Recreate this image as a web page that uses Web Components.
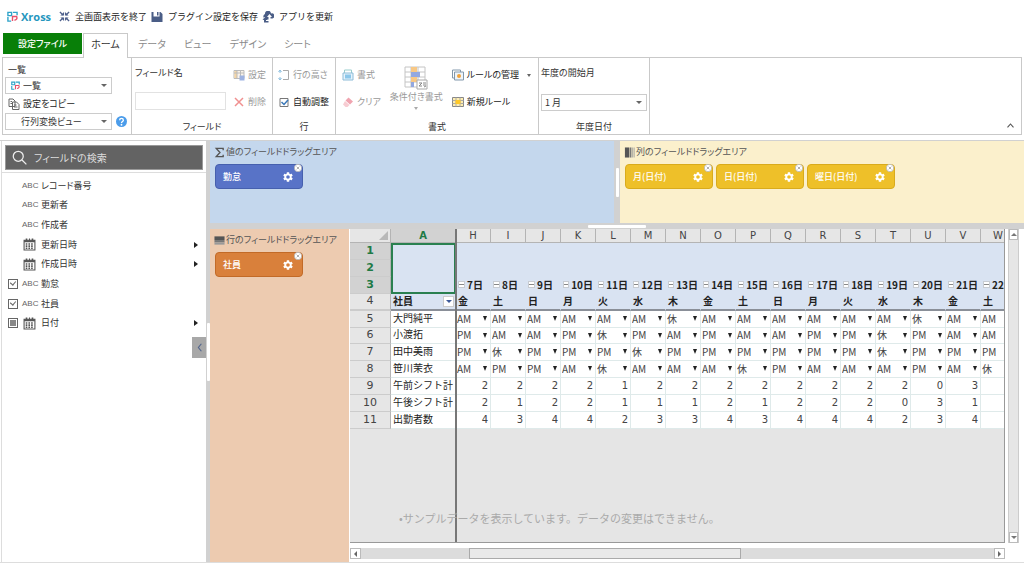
<!DOCTYPE html>
<html lang="ja">
<head>
<meta charset="utf-8">
<meta name="viewport" content="width=device-width, initial-scale=1">
<title>Xross</title>
<style>
:root {
  --ui-font: "Noto Sans CJK JP", sans-serif;
  --sheet-font: "DejaVu Sans", "Noto Sans CJK JP", sans-serif;
  --line: #c9c9c9;
  --gap: #d1d1d1;
  --text: #333;
  --muted: #999;
}

* {
  box-sizing: border-box;
}

body {
  margin: 0;
  height: 100vh;
  overflow: hidden;
  display: flex;
  flex-direction: column;
  background: #fff;
  color: var(--text);
  font: 9px/14px var(--ui-font);
  font-feature-settings: "palt";
}

.ribbon {
  display: flex;
  flex: none;
  height: 78px;
  margin: 0 2px;
  border: 1px solid var(--line);
}

.ribbon-end {
  flex: 1;
  display: flex;
  justify-content: flex-end;
  align-items: flex-end;
}

.ribbon-end button {
  border: 0;
  background: none;
  padding: 4px 6px;
  height: 18px;
  line-height: 0;
}

.stack {
  display: flex;
  flex-direction: column;
  align-items: flex-start;
}

.pair {
  display: grid;
  grid-template-rows: 16px 18px;
  row-gap: 10px;
  align-items: center;
  justify-items: start;
  align-content: start;
  padding-top: 9px;
}

.help {
  display: flex;
  gap: 4px;
  align-items: center;
}

.help button {
  border: 0;
  background: none;
  padding: 0;
  line-height: 0;
}

.workspace {
  flex: 1;
  min-height: 0;
  display: flex;
  margin: 5px 0 13px;
  border-top: 1px solid var(--gap);
  border-bottom: 1px solid #ddd;
}

.fields {
  flex: none;
  width: 205px;
  margin-left: 1px;
  border-left: 1px solid #ddd;
  display: flex;
  flex-direction: column;
  position: relative;
}

.list {
  display: grid;
  grid-template-rows: repeat(8, 1fr);
  height: 157px;
  margin-top: 3px;
}

.collapse {
  position: absolute;
  right: 0;
  top: 196px;
  width: 14px;
  height: 21px;
  padding: 0;
  border: 0;
  background: #a8a8a8;
  display: grid;
  place-items: center;
}

.main {
  flex: 1;
  min-width: 0;
  display: flex;
  flex-direction: column;
}

.top-areas {
  flex: none;
  height: 82px;
  display: flex;
}

.top-areas drop-area {
  flex: 1;
}

.bottom {
  flex: 1;
  min-height: 0;
  display: flex;
}

.bottom drop-area {
  flex: none;
  width: 139px;
}
</style>
</head>
<body>
<top-bar></top-bar>
<tab-bar></tab-bar>

<section class="ribbon">
  <ribbon-group style="--w: 129px">
    <div class="stack" style="padding: 5px 1px 0">
      <drop-down label="一覧" value="一覧" icon="logo" style="--field: 107px"></drop-down>
      <tool-button icon="copy" style="--row: 19px">設定をコピー</tool-button>
      <div class="help">
        <drop-down name="ビュー" value="行列変換ビュー" indent style="--field: 107px"></drop-down>
        <button aria-label="ヘルプ"><ui-icon name="help" size="11"></ui-icon></button>
      </div>
    </div>
  </ribbon-group>
  <ribbon-group caption="フィールド" style="--w: 141px">
    <text-field label="フィールド名"></text-field>
    <div class="pair" style="padding-left: 2px">
      <tool-button icon="config" off>設定</tool-button>
      <tool-button icon="cross" off>削除</tool-button>
    </div>
  </ribbon-group>
  <ribbon-group caption="行" style="--w: 63px">
    <div class="pair" style="padding-left: 1px">
      <tool-button icon="rowheight" off>行の高さ</tool-button>
      <tool-button icon="tick">自動調整</tool-button>
    </div>
  </ribbon-group>
  <ribbon-group caption="書式" style="--w: 203px">
    <div class="pair" style="padding-left: 2px">
      <tool-button icon="format" off>書式</tool-button>
      <tool-button icon="eraser" off>クリア</tool-button>
    </div>
    <big-button icon="condition">条件付き書式</big-button>
    <div class="pair">
      <tool-button icon="rules" menu>ルールの管理</tool-button>
      <tool-button icon="newrule">新規ルール</tool-button>
    </div>
  </ribbon-group>
  <ribbon-group caption="年度日付" style="--w: 111px">
    <div class="stack" style="padding: 8px 1px 0">
      <drop-down label="年度の開始月" value="1 月" style="--field: 106px; --label-gap: 14px"></drop-down>
    </div>
  </ribbon-group>
  <div class="ribbon-end">
    <button aria-label="リボンを閉じる"><ui-icon name="up" size="9"></ui-icon></button>
  </div>
</section>

<div class="workspace">
  <section class="fields">
    <search-box></search-box>
    <div class="list">
      <field-item type="text">レコード番号</field-item>
      <field-item type="text">更新者</field-item>
      <field-item type="text">作成者</field-item>
      <field-item type="date" more>更新日時</field-item>
      <field-item type="date" more>作成日時</field-item>
      <field-item type="text" check="on">勤怠</field-item>
      <field-item type="text" check="on">社員</field-item>
      <field-item type="date" check="mixed" more>日付</field-item>
    </div>
    <button class="collapse" aria-label="閉じる"><ui-icon name="left" size="9"></ui-icon></button>
  </section>
  <split-bar direction="vertical" style="--size: 4px; --handle: 58px"></split-bar>
  <div class="main">
    <div class="top-areas">
      <drop-area heading="値のフィールドドラッグエリア" icon="sigma" style="--bg: #c4d7ed">
        <field-chip style="--chip: #5873c7; --edge: #4660ae">勤怠</field-chip>
      </drop-area>
      <split-bar direction="vertical" style="--size: 6px; --handle: 29px"></split-bar>
      <drop-area heading="列のフィールドドラッグエリア" icon="cols" style="--bg: #fbf0cc">
        <field-chip style="--chip: #eec029; --edge: #d9ab1c">月(日付)</field-chip>
        <field-chip style="--chip: #eec029; --edge: #d9ab1c">日(日付)</field-chip>
        <field-chip style="--chip: #eec029; --edge: #d9ab1c">曜日(日付)</field-chip>
      </drop-area>
    </div>
    <split-bar direction="horizontal" style="--size: 6px; --handle: 58px"></split-bar>
    <div class="bottom">
      <drop-area heading="行のフィールドドラッグエリア" icon="rows" style="--bg: #edcbb0"> 
        <field-chip style="--chip: #d9803b; --edge: #c26a27">社員</field-chip>
      </drop-area>
      <sheet-view></sheet-view>
    </div>
  </div>
</div>

<script>
const GEAR = "M19.14 12.94c.04-.3.06-.61.06-.94 0-.32-.02-.64-.07-.94l2.03-1.58a.49.49 0 0 0 .12-.61l-1.92-3.32a.49.49 0 0 0-.59-.22l-2.39.96c-.5-.38-1.03-.7-1.62-.94l-.36-2.54a.48.48 0 0 0-.48-.41h-3.84c-.24 0-.43.17-.47.41l-.36 2.54c-.59.24-1.13.57-1.62.94l-2.39-.96c-.22-.08-.47 0-.59.22L2.74 8.87c-.12.21-.08.47.12.61l2.03 1.58c-.05.3-.09.63-.09.94s.02.64.07.94l-2.03 1.58a.49.49 0 0 0-.12.61l1.92 3.32c.12.22.37.29.59.22l2.39-.96c.5.38 1.03.7 1.62.94l.36 2.54c.05.24.24.41.48.41h3.84c.24 0 .44-.17.47-.41l.36-2.54c.59-.24 1.13-.56 1.62-.94l2.39.96c.22.08.47 0 .59-.22l1.92-3.32c.12-.22.07-.47-.12-.61zM12 15.6a3.6 3.6 0 1 1 0-7.2 3.6 3.6 0 0 1 0 7.2z";

// every icon lives in a 24 x 24 box
const icons = {
  logo: `<g fill="none" stroke-width="3"><path stroke="#2ea3c9" d="M2 3h8v7H2zM13 3h9v6"/><path stroke="#2ea3c9" d="M2 13v9h7"/><path stroke="#e8506a" d="M12 22V12h9c2 5-1 8-5 8"/></g>`,
  shrink: `<path fill="none" stroke="#4d5f8c" stroke-width="3" d="M2 2l7 7M22 2l-7 7M2 22l7-7M22 22l-7-7"/><path fill="#4d5f8c" d="M3 10h8V2zM21 10h-8V2zM3 14h8v8zM21 14h-8v8z"/>`,
  save: `<path fill="#4a5d86" d="M1 2h4v9h12V2h2l4 4v16H1zM12 2h3v7h-3z"/>`,
  update: `<path fill="#4a5d86" d="M4 14a5 5 0 0 1 2-8 6 6 0 0 1 12-1 5 5 0 0 1 3 10h-4v-3h3l-5-6-5 6h3v5h-3l-5-5-2 3zM1 17l5-4 5 5H8v2h5v3H4v-5z"/>`,
  copy: `<g fill="#fff" stroke="#666" stroke-width="2"><path d="M2 2h8l4 4v11H2zM9 8h8l5 5v10H9z"/><path d="M12 14h5M12 18h7M5 7h3M5 11h3"/></g>`,
  help: `<circle cx="12" cy="12" r="12" fill="#4b9cea"/><path fill="none" stroke="#fff" stroke-width="3" d="M8 9c0-5 8-5 8 0 0 3-4 3-4 6"/><circle cx="12" cy="19" r="2" fill="#fff"/>`,
  config: `<path fill="#faf3ea" stroke="#bbb" stroke-width="2" d="M2 3h20v16H2z"/><path fill="#f6d6a4" d="M3 4h5v14H3z"/><path stroke="#bbb" stroke-width="2" d="M8 3v16M15 3v16M2 8h20"/><path fill="#9db2e2" d="M13 13h10v10H13z"/>`,
  cross: `<path stroke="#f09090" stroke-width="3" d="M4 4l16 16M20 4L4 20"/>`,
  rowheight: `<path fill="none" stroke="#8cbfe0" stroke-width="2" d="M4 2v6M1 6l3-4 3 4M4 22v-6M1 18l3 4 3-4"/><path fill="none" stroke="#aaa" stroke-width="2" d="M10 3h11v18H10"/>`,
  tick: `<path fill="#fff" stroke="#777" stroke-width="2" d="M4 5h16v16H4z"/><path fill="none" stroke="#3a78b8" stroke-width="3" d="M7 12l5 5 8-9"/>`,
  format: `<path fill="none" stroke="#9cc" stroke-width="2" d="M5 8V2h14v6"/><path fill="#e6f3fb" stroke="#8dbcd8" stroke-width="2" d="M2 8h20v14H2z"/><path fill="#8cc7ea" d="M6 11h12v8H6z"/>`,
  eraser: `<path fill="#f0a4b0" d="M13 3l9 8-6 6-9-8z"/><path fill="#f7ccd2" d="M6 10l9 8-4 4H7l-5-5z"/>`,
  condition: `<path fill="#fff" stroke="#c4c4c4" d="M1 1h20v20H1zM1 6h20M1 11h20M1 16h20M7 1v20M14 1v20"/><path fill="#f8c885" d="M7 1h6v5H7zM7 11h6v5H7z"/><path fill="#93a8e0" d="M7 6h9v5H7zM7 16h3v5H7z"/><path fill="#fff" stroke="#aaa" d="M13 14h10v9H13z"/><path fill="none" stroke="#888" d="M15 17h3l-3 3h3M19 17h3M19 19h3M20 21l2-1"/>`,
  rules: `<path fill="#fff" stroke="#8298ac" stroke-width="2" d="M1 2h16v16H1z"/><path fill="#eef4fa" stroke="#8298ac" stroke-width="2" d="M5 6h18v16H5z"/><circle cx="14" cy="14" r="4" fill="#f1a33c"/>`,
  newrule: `<path fill="#ffeeb0" stroke="#888" stroke-width="2" d="M1 3h22v18H1z"/><path stroke="#aaa" stroke-width="2" d="M1 9h22M1 15h22M8 3v18M16 3v18"/><path fill="#ffc928" d="M7 8h10v8H7z"/>`,
  up: `<path fill="none" stroke="#555" stroke-width="3" d="M4 17l8-9 8 9"/>`,
  left: `<path fill="none" stroke="#51648c" stroke-width="3" d="M17 2L9 12l8 10"/>`,
  search: `<circle cx="10" cy="10" r="8" fill="none" stroke="#eee" stroke-width="2"/><path stroke="#eee" stroke-width="2" d="M16 16l7 7"/>`,
  calendar: `<path fill="#fff" stroke="#555" stroke-width="2" d="M2 4h20v18H2z"/><path fill="#555" d="M2 4h20v4H2zM5 1h3v5H5zM11 1h2v5h-2zM16 1h3v5h-3z"/><path stroke="#555" stroke-width="3" stroke-dasharray="3 2" d="M5 11h15M5 15h15M5 19h15"/>`,
  sigma: `<path fill="none" stroke="#555" stroke-width="3" d="M20 7V3H5l8 9-8 9h15v-4"/>`,
  rows: `<path fill="#555" d="M1 3h22v8H1z"/><path fill="#777" d="M1 11h22v5H1z"/><path fill="#999" d="M1 16h22v5H1z"/>`,
  cols: `<path fill="#555" d="M2 1h9v22H2z"/><path fill="#777" d="M12 1h4v22h-4z"/><path fill="#999" d="M17 1h2v22h-2zM21 1h2v22h-2z"/>`,
  gear: `<path fill="#fff" d="${GEAR}"/>`,
  close: `<circle cx="12" cy="12" r="11" fill="#fff" stroke="#aaa" stroke-width="2"/><path stroke="#888" stroke-width="2" d="M8 8l8 8M16 8l-8 8"/>`,
};

class UiIcon extends HTMLElement {
  constructor() {
    super();
    this.attachShadow({ mode: "open" });
  }

  connectedCallback() {
    const size = this.getAttribute("size") || 12;
    this.shadowRoot.innerHTML = `
      <style>
        :host { display: inline-block; flex: none; line-height: 0; }
        svg { display: block; }
      </style>
      <svg aria-hidden="true" width="${size}" height="${size}" viewBox="0 0 24 24">${icons[this.getAttribute("name")]}</svg>`;
  }
}
customElements.define("ui-icon", UiIcon);

class TopBar extends HTMLElement {
  constructor() {
    super();
    this.attachShadow({ mode: "open" }).innerHTML = `
      <style>
        :host { display: flex; flex: none; align-items: center; height: 33px; padding-left: 7px; font-feature-settings: normal; }
        .brand { display: flex; align-items: center; gap: 3px; width: 52px; color: #2596be; font: 700 11px/16px "Open Sans", "Noto Sans", sans-serif; }
        button { display: flex; align-items: center; gap: 5px; margin-right: 4px; padding: 0; border: 0; background: none; color: #222; font: inherit; font-feature-settings: inherit; white-space: nowrap; }
      </style>
      <span class="brand"><ui-icon name="logo" size="11"></ui-icon>Xross</span>
      <button><ui-icon name="shrink" size="11"></ui-icon>全画面表示を終了</button>
      <button><ui-icon name="save" size="12"></ui-icon>プラグイン設定を保存</button>
      <button><ui-icon name="update" size="12"></ui-icon>アプリを更新</button>`;
  }
}
customElements.define("top-bar", TopBar);

class TabBar extends HTMLElement {
  constructor() {
    super();
    this.attachShadow({ mode: "open" }).innerHTML = `
      <style>
        :host { display: flex; flex: none; height: 25px; padding-left: 3px; position: relative; margin-bottom: -1px; }
        button { height: 21px; padding: 0 9px; border: 0; background: none; color: #8a8a8a; font: inherit; font-size: 10px; white-space: nowrap; }
        .file { width: 79px; background: #087f08; color: #fff; font-size: 9px; font-weight: 500; }
        .home { height: 25px; width: 45px; padding: 0 0 4px; margin: 0 1px; border: 1px solid #c9c9c9; border-bottom: 0; background: #fff; color: #333; }
      </style>
      <button class="file">設定ファイル</button>
      <button class="home">ホーム</button>
      <button>データ</button>
      <button>ビュー</button>
      <button>デザイン</button>
      <button>シート</button>`;
  }
}
customElements.define("tab-bar", TabBar);

class RibbonGroup extends HTMLElement {
  constructor() {
    super();
    this.attachShadow({ mode: "open" });
  }

  connectedCallback() {
    const caption = this.getAttribute("caption");
    this.shadowRoot.innerHTML = `
      <style>
        :host { display: flex; flex: none; flex-direction: column; box-sizing: border-box; width: var(--w); border-right: 1px solid var(--line); }
        .body { flex: 1; display: flex; padding: 0 2px 0 1px; }
        .caption { height: 14px; text-align: center; }
      </style>
      <div class="body"><slot></slot></div>
      ${caption ? `<div class="caption">${caption}</div>` : ""}`;
  }
}
customElements.define("ribbon-group", RibbonGroup);

class ToolButton extends HTMLElement {
  constructor() {
    super();
    this.attachShadow({ mode: "open" });
  }

  connectedCallback() {
    this.shadowRoot.innerHTML = `
      <style>
        :host { display: block; }
        button { display: flex; align-items: center; gap: 3px; height: var(--row, 16px); padding: 0 3px; border: 0; background: none; color: #222; font: inherit; white-space: nowrap; }
        :host([off]) button { color: var(--muted); }
        .arrow { margin-left: 5px; border: 2px solid transparent; border-top: 3px solid #666; border-bottom: 0; }
      </style>
      <button><ui-icon name="${this.getAttribute("icon")}" size="12"></ui-icon><slot></slot>
      ${this.hasAttribute("menu") ? `<span class="arrow"></span>` : ""}</button>`;
  }
}
customElements.define("tool-button", ToolButton);

class BigButton extends HTMLElement {
  constructor() {
    super();
    this.attachShadow({ mode: "open" });
  }

  connectedCallback() {
    this.shadowRoot.innerHTML = `
      <style>
        :host { display: block; padding-top: 8px; }
        button { display: flex; flex-direction: column; align-items: center; padding: 0 6px; border: 0; background: none; color: var(--muted); font: inherit; white-space: nowrap; }
        .arrow { margin-top: 3px; border: 2px solid transparent; border-top: 3px solid #aaa; border-bottom: 0; }
      </style>
      <button><ui-icon name="${this.getAttribute("icon")}" size="24"></ui-icon><slot></slot><span class="arrow"></span></button>`;
  }
}
customElements.define("big-button", BigButton);

class DropDown extends HTMLElement {
  constructor() {
    super();
    this.attachShadow({ mode: "open" });
  }

  connectedCallback() {
    const label = this.getAttribute("label");
    const icon = this.getAttribute("icon");
    const name = label || this.getAttribute("name");
    const pad = icon ? 17 : this.hasAttribute("indent") ? 15 : 3;
    this.shadowRoot.innerHTML = `
      <style>
        :host { display: block; }
        label { display: block; height: 14px; margin-bottom: var(--label-gap, 0); }
        :host([icon]) label { padding-left: 3px; }
        .field { position: relative; width: var(--field); height: 17px; }
        select { appearance: none; box-sizing: border-box; width: 100%; height: 17px; padding: 0 12px 0 ${pad}px; border: 1px solid #ccc; border-radius: 0; background: #fff; color: #333; font: inherit; font-feature-settings: inherit; }
        .field::after { content: ""; position: absolute; right: 5px; top: 7px; border: 3px solid transparent; border-top-color: #666; border-bottom: 0; pointer-events: none; }
        ui-icon { position: absolute; left: 6px; top: 4px; }
      </style>
      ${label ? `<label for="box">${label}</label>` : ""}
      <div class="field">
        <select id="box" aria-label="${name}"><option>${this.getAttribute("value")}</option></select>
        ${icon ? `<ui-icon name="${icon}" size="9"></ui-icon>` : ""}
      </div>`;
  }
}
customElements.define("drop-down", DropDown);

class TextField extends HTMLElement {
  constructor() {
    super();
    this.attachShadow({ mode: "open" });
  }

  connectedCallback() {
    this.shadowRoot.innerHTML = `
      <style>
        :host { display: block; padding: 8px 2px 0; }
        label { display: block; height: 14px; margin-bottom: 12px; }
        input { box-sizing: border-box; width: 91px; height: 18px; border: 1px solid #e2e2e2; background: #fff; font: inherit; }
      </style>
      <label for="box">${this.getAttribute("label")}</label>
      <input id="box" type="text">`;
  }
}
customElements.define("text-field", TextField);

class SearchBox extends HTMLElement {
  constructor() {
    super();
    this.attachShadow({ mode: "open" }).innerHTML = `
      <style>
        :host { display: block; flex: none; padding: 4px 3px 2px 3px; border-bottom: 1px solid #ddd; }
        div { display: flex; align-items: center; gap: 7px; height: 25px; padding-left: 6px; background: #636363; border: 1px solid #999; box-sizing: border-box; }
        input { flex: 1; min-width: 0; padding: 0; border: 0; background: none; color: #fff; font: inherit; font-size: 10px; font-feature-settings: inherit; }
        input::placeholder { color: #ddd; }
      </style>
      <div><ui-icon name="search" size="15"></ui-icon><input type="search" aria-label="フィールドの検索" placeholder="フィールドの検索"></div>`;
  }
}
customElements.define("search-box", SearchBox);

class FieldItem extends HTMLElement {
  constructor() {
    super();
    this.attachShadow({ mode: "open" });
  }

  connectedCallback() {
    const check = this.getAttribute("check");
    const date = this.getAttribute("type") === "date";
    this.shadowRoot.innerHTML = `
      <style>
        :host { display: block; }
        label { display: flex; align-items: center; height: 100%; padding: 0 8px 0 6px; }
        .check { width: 14px; line-height: 0; }
        input { appearance: none; display: block; position: relative; margin: 0; width: 10px; height: 10px; border: 1px solid #666; background: #fff; box-sizing: border-box; }
        input:checked::after { content: ""; position: absolute; left: 2px; top: 0; width: 3px; height: 4px; border: solid #666; border-width: 0 1px 1px 0; transform: rotate(40deg); }
        input:indeterminate::after { content: ""; position: absolute; inset: 1px; background: #888; }
        .type { width: 19px; color: #666; font: 8px/14px "Liberation Sans", sans-serif; }
        .type ui-icon { margin-left: 1px; vertical-align: middle; }
        .more { margin-left: auto; border: 3px solid transparent; border-left: 4px solid #222; border-right: 0; }
      </style>
      <label>
        <span class="check">${check ? `<input type="checkbox"${check === "on" ? " checked" : ""}>` : ""}</span>
        <span class="type">${date ? `<ui-icon name="calendar" size="13"></ui-icon>` : "ABC"}</span>
        <slot></slot>
        ${this.hasAttribute("more") ? `<span class="more"></span>` : ""}
      </label>`;
    if (check === "mixed") this.shadowRoot.querySelector("input").indeterminate = true;
  }
}
customElements.define("field-item", FieldItem);

class SplitBar extends HTMLElement {
  constructor() {
    super();
    this.attachShadow({ mode: "open" }).innerHTML = `
      <style>
        :host { display: flex; flex: none; align-items: center; justify-content: center; background: var(--gap); }
        :host([direction="vertical"]) { width: var(--size); }
        :host([direction="horizontal"]) { height: var(--size); }
        span { background: #fff; border-radius: 1px; }
        :host([direction="vertical"]) span { width: 3px; height: var(--handle); }
        :host([direction="horizontal"]) span { width: var(--handle); height: 3px; }
      </style>
      <span></span>`;
  }
}
customElements.define("split-bar", SplitBar);

class DropArea extends HTMLElement {
  constructor() {
    super();
    this.attachShadow({ mode: "open" });
  }

  connectedCallback() {
    this.shadowRoot.innerHTML = `
      <style>
        :host { display: block; box-sizing: border-box; min-width: 0; padding: 3px 0 0 4px; background: var(--bg); }
        .heading { display: flex; align-items: center; gap: 1px; height: 16px; color: #555; white-space: nowrap; }
        .chips { display: flex; flex-wrap: wrap; gap: 3px; margin: 4px 0 0 1px; }
      </style>
      <div class="heading"><ui-icon name="${this.getAttribute("icon")}" size="11"></ui-icon>${this.getAttribute("heading")}</div>
      <div class="chips"><slot></slot></div>`;
  }
}
customElements.define("drop-area", DropArea);

class FieldChip extends HTMLElement {
  constructor() {
    super();
    this.attachShadow({ mode: "open" }).innerHTML = `
      <style>
        :host { display: flex; position: relative; box-sizing: border-box; align-items: center; justify-content: space-between; width: 88px; height: 25px; padding: 0 8px 0 7px; border: 1px solid var(--edge); border-radius: 4px; background: var(--chip); color: #fff; font-weight: 500; }
        button { padding: 0; border: 0; background: none; line-height: 0; }
        .close { position: absolute; right: 0; top: -1px; }
      </style>
      <slot></slot>
      <button aria-label="設定"><ui-icon name="gear" size="12"></ui-icon></button>
      <button class="close" aria-label="削除"><ui-icon name="close" size="8"></ui-icon></button>`;
  }
}
customElements.define("field-chip", FieldChip);

class ScrollBar extends HTMLElement {
  constructor() {
    super();
    this.attachShadow({ mode: "open" }).innerHTML = `
      <style>
        :host { display: flex; box-sizing: border-box; background: #dcdcdc; }
        :host([direction="vertical"]) { flex-direction: column; border: solid #ccc; border-width: 0 1px; background: #e6e6e6; }
        button { flex: none; display: grid; place-items: center; box-sizing: border-box; width: 11px; height: 11px; padding: 0; border: 1px solid #bbb; background: #fff; }
        :host([direction="vertical"]) button { width: 100%; }
        i { border: 3px solid transparent; }
        .start { border-right-color: #666; border-left: 0; }
        .end { border-left-color: #666; border-right: 0; }
        :host([direction="vertical"]) .start { border: 3px solid transparent; border-bottom-color: #777; border-top: 0; }
        :host([direction="vertical"]) .end { border: 3px solid transparent; border-top-color: #777; border-bottom: 0; }
        .track { flex: 1; display: flex; }
        .thumb { box-sizing: border-box; margin-left: 17%; width: 43%; border: 1px solid #aaa; background: #e9e9e9; }
        :host([direction="vertical"]) .thumb { display: none; }
      </style>
      <button aria-label="前へ"><i class="start"></i></button>
      <div class="track"><div class="thumb"></div></div>
      <button aria-label="次へ"><i class="end"></i></button>`;
  }
}
customElements.define("scroll-bar", ScrollBar);

const columns = [..."HIJKLMNOPQRSTUVW"];
const days = columns.map((c, i) => (c === "W" ? "22" : `${i + 7}日`));
const weekdays = [..."金土日月火水木"];
const shifts = { A: "AM", P: "PM", 休: "休" };
const people = [
  ["大門純平", "AAAAAA休AAAAAA休AA"],
  ["小渡拓", "PAAP休PAPAAPP休PAA"],
  ["田中美雨", "P休PPP休PPPPPP休PPP"],
  ["笹川茉衣", "APPA休AAA休PAAAPA休"],
];
const totals = [
  ["午前シフト計", "222212222222203"],
  ["午後シフト計", "212211121222031"],
  ["出勤者数", "434423343444234"],
];

class SheetView extends HTMLElement {
  constructor() {
    super();
    this.attachShadow({ mode: "open" }).innerHTML = `
      <style>
        :host { flex: 1; min-width: 0; display: grid; grid-template: minmax(0, 1fr) 11px / minmax(0, 1fr) 11px; gap: 5px 3px; padding: 0 5px 3px 1px; }
        .view { position: relative; overflow: hidden; background: #e5e5e5; border: solid #999; border-width: 0 1px 1px 0; }
        .freeze { position: absolute; left: 105px; top: 0; bottom: 0; width: 2px; background: #777; }
        .note { position: absolute; left: 49px; bottom: 16px; margin: 0; color: #aaa; font-size: 11px; line-height: 16px; white-space: nowrap; font-feature-settings: normal; }
        table { table-layout: fixed; border-collapse: separate; border-spacing: 0; width: 666px; height: 200px; font: 10px/14px var(--sheet-font); font-feature-settings: normal; color: #222; }
        th, td { box-sizing: border-box; height: 16px; padding: 0 2px; overflow: hidden; white-space: nowrap; text-align: left; border: solid #dfeaea; border-width: 0 1px 1px 0; background: #fff; }
        thead th { height: 14px; line-height: 12px; padding: 0; }
        thead th, .no { padding: 0; text-align: center; font-weight: 400; color: #444; background: #e6e6e6; border-color: #b4b4b4; }
        .no { font-size: 11px; border-bottom-color: #ccc; }
        thead .on, .no.on { background: #d2d2d2; color: #1f7a46; font-weight: 700; }
        .corner { position: relative; }
        .corner::after { content: ""; position: absolute; right: 2px; bottom: 2px; border: solid transparent; border-width: 0 0 9px 9px; border-bottom-color: #b8b8b8; }
        .blue, .blue td, .blue th { background: #d9e3f2; border-color: #d9e3f2; }
        .blue .no { background: #e6e6e6; border-color: #b4b4b4; border-bottom-color: #ccc; }
        .blue .no.on { background: #d2d2d2; }
        .blue .pick { border: 2px solid #2a8050; }
        .blue td, .blue th:not(.no) { font-family: var(--ui-font); font-weight: 700; }
        .day span { display: flex; align-items: center; gap: 2px; }
        .day i { width: 7px; height: 7px; box-sizing: border-box; border: 1px solid #c8ccd2; background: linear-gradient(#fff 2px, #888 2px 3px, #fff 3px); }
        .last > * { border-bottom: 2px solid #8a8f98; }
        .last td, .last th:not(.no) { border-bottom-color: #8a8f98; }
        .name { padding-right: 1px; }
        .name div { display: flex; justify-content: space-between; align-items: center; }
        .name button { display: grid; place-items: center; width: 11px; height: 11px; padding: 0; border: 1px solid #ccc; background: #fff; }
        .name button::after { content: ""; border: 3px solid transparent; border-top-color: #3d5a99; border-bottom: 0; }
        .shift { position: relative; padding: 0; }
        .shift::after { content: ""; position: absolute; right: 3px; top: 5px; border: 2px solid transparent; border-top: 5px solid #222; border-bottom: 0; pointer-events: none; }
        select { appearance: none; display: block; width: 100%; height: 15px; margin: 0; padding: 0 1px; border: 0; background: none; color: #444; font: 10px/14px var(--ui-font); }
        .num { text-align: right; color: #444; }
      </style>
      <div class="view">
        <table></table>
        <div class="freeze"></div>
        <p class="note">•サンプルデータを表示しています。データの変更はできません。</p>
      </div>
      <scroll-bar direction="vertical"></scroll-bar>
      <scroll-bar direction="horizontal"></scroll-bar>`;
    this.shadowRoot.querySelector("table").innerHTML = this.rows();
  }

  rows() {
    const no = (n) => `<th class="no${n < 4 ? " on" : ""}">${n}</th>`;
    const select = (code, label) => `<select aria-label="${label}">${Object.values(shifts)
      .map((s) => `<option${s === shifts[code] ? " selected" : ""}>${s}</option>`).join("")}</select>`;

    return `
      <colgroup><col style="width: 41px"><col style="width: 65px">${`<col style="width: 35px">`.repeat(16)}</colgroup>
      <thead><tr><th class="corner"></th><th class="on">A</th>${columns.map((c) => `<th>${c}</th>`).join("")}</tr></thead>
      <tbody>
        <tr class="blue">${no(1)}<td class="pick" rowspan="3"></td><td colspan="16"></td></tr>
        <tr class="blue">${no(2)}<td colspan="16"></td></tr>
        <tr class="blue">${no(3)}${days.map((d) => `<td class="day"><span><i></i>${d}</span></td>`).join("")}</tr>
        <tr class="blue last">${no(4)}<th class="name"><div>社員<button aria-label="絞り込み"></button></div></th>${columns.map((c, i) => `<td>${weekdays[i % 7]}</td>`).join("")}</tr>
        ${people.map(([name, codes], r) => `<tr>${no(r + 5)}<td>${name}</td>${[...codes].map((code, i) => `<td class="shift">${select(code, `${name} ${i + 7}日`)}</td>`).join("")}</tr>`).join("")}
        ${totals.map(([name, values], r) => `<tr>${no(r + 9)}<td>${name}</td>${[...values].map((v) => `<td class="num">${v}</td>`).join("")}<td></td></tr>`).join("")}
      </tbody>`;
  }
}
customElements.define("sheet-view", SheetView);
</script>
</body>
</html>
